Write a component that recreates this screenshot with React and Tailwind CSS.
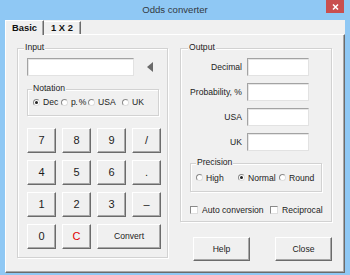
import React from "react";

function Radio({ checked, label, cls, tcls }) {
  return (
    <div className={"flex items-center gap-[3px] whitespace-nowrap shrink-0 " + cls}>
      <span className="w-[7px] h-[7px] rounded-full bg-white border border-t-[#8a8a8a] border-l-[#8a8a8a] border-r-[#dedede] border-b-[#dedede] flex items-center justify-center shrink-0">
        {checked && <span className="w-[3px] h-[3px] rounded-full bg-[#222]" />}
      </span>
      <span className={tcls}>{label}</span>
    </div>
  );
}

function Check({ label, cls }) {
  return (
    <div className={"flex items-center gap-[4px] whitespace-nowrap shrink-0 " + cls}>
      <span className="w-[8px] h-[8px] bg-white border border-t-[#8a8a8a] border-l-[#8a8a8a] border-r-[#dedede] border-b-[#dedede] shrink-0" />
      <span>{label}</span>
    </div>
  );
}

function Legend({ children, cls }) {
  return (
    <span className={"absolute -top-[7px] px-[1px] bg-[#f0f0f0] leading-[11px] text-[8.6px] " + cls}>
      {children}
    </span>
  );
}

const btn =
  "flex items-center justify-center bg-[#f0f0f0] border border-t-white border-l-white border-r-[#6b6b6b] border-b-[#6b6b6b] shadow-[inset_-1px_-1px_0_#a8a8a8]";

const box =
  "bg-white border border-t-[#a3a3a3] border-l-[#a3a3a3] border-r-[#e2e2e2] border-b-[#e2e2e2] shadow-[inset_1px_1px_0_#e6e6e6]";

const group =
  "relative border border-[#d2d2d2] shadow-[inset_1px_1px_0_#ffffff,1px_1px_0_#ffffff]";

function Key({ children, cls }) {
  return <div className={btn + " h-[25px] text-[11px] " + cls}>{children}</div>;
}

export default function App() {
  return (
    <div className="w-[350px] h-[275px] bg-[#8fc8f4] flex flex-col font-['Liberation_Sans',Arial,sans-serif] text-[#1c1c1c]">
      <div className="h-[20px] grid grid-cols-[1fr_auto_1fr] items-start">
        <div />
        <div className="text-[9.6px] leading-[20px] text-[#333a42]">Odds converter</div>
        <div className="flex justify-end pr-[6px]">
          <div className="w-[18px] h-[13px] bg-[#c94f4f] flex items-center justify-center">
            <svg width="7" height="6" viewBox="0 0 7 6">
              <path d="M1 0.5 L6 5.5 M6 0.5 L1 5.5" stroke="#fff" strokeWidth="1.5" />
            </svg>
          </div>
        </div>
      </div>
      <div className="flex-1 mx-[5px] mb-[2px] bg-[#f0f0f0] flex flex-col">
        <div className="h-[14px] flex items-start relative z-10">
          <div className="w-[39px] h-[15px] bg-[#f0f0f0] border-t border-l border-t-white border-l-white border-r border-r-[#6b6b6b] shadow-[inset_-1px_0_0_#a8a8a8] flex items-center justify-center font-bold text-[9.4px] text-[#111]">
            Basic
          </div>
          <div className="w-[37px] h-[13px] mt-[1px] bg-[#f0f0f0] border-t border-t-white border-r border-r-[#6b6b6b] shadow-[inset_-1px_0_0_#a8a8a8] flex items-center justify-center font-bold text-[9.4px] text-[#111]">
            1 X 2
          </div>
        </div>
        <div className="flex-1 border border-t-white border-l-white border-r-[#6b6b6b] border-b-[#6b6b6b] shadow-[inset_-1px_-1px_0_#a8a8a8] flex gap-[12px] pl-[11px] pt-[13px] text-[8.6px]">
          {/* Input group */}
          <div className={group + " w-[151px] h-[210px] pl-[9px] pt-[9px]"}>
            <Legend cls="left-[6px]">Input</Legend>
            <div className="flex items-center">
              <div className={box + " w-[107px] h-[18px]"} />
              <svg className="ml-[13px]" width="6" height="10" viewBox="0 0 6 10">
                <path d="M6 0 L0 5 L6 10 Z" fill="#6a6a6a" />
              </svg>
            </div>
            <div className={group + " mt-[13px] w-[132px] h-[27px] flex items-center pl-[5px]"}>
              <Legend cls="left-[4px]">Notation</Legend>
              <Radio checked label="Dec" cls="w-[28px]" />
              <Radio label="p. %" cls="w-[27px]" tcls="tracking-[-0.6px]" />
              <Radio label="USA" cls="w-[34px]" />
              <Radio label="UK" cls="" />
            </div>
            <div className="mt-[12px] grid grid-cols-[29px_29px_29px_29px] gap-x-[6px] gap-y-[7px]">
              <Key>7</Key>
              <Key>8</Key>
              <Key>9</Key>
              <Key>/</Key>
              <Key>4</Key>
              <Key>5</Key>
              <Key>6</Key>
              <Key>.</Key>
              <Key>1</Key>
              <Key>2</Key>
              <Key>3</Key>
              <Key>–</Key>
              <Key>0</Key>
              <Key cls="text-[#e00000]">C</Key>
              <div className={btn + " h-[25px] col-span-2 text-[8.6px]"}>Convert</div>
            </div>
          </div>
          {/* Right column */}
          <div className="w-[152px] flex flex-col">
            <div className={group + " h-[174px] pt-[9px]"}>
              <Legend cls="left-[7px]">Output</Legend>
              <div className="flex flex-col gap-[7px] pr-[22px]">
                {["Decimal", "Probability, %", "USA", "UK"].map((l) => (
                  <div key={l} className="flex items-center justify-end gap-[5px]">
                    <span>{l}</span>
                    <div className={box + " w-[62px] h-[18px]"} />
                  </div>
                ))}
              </div>
              <div className={group + " mt-[12px] ml-[9px] w-[132px] h-[29px] flex items-center pl-[5px] pt-[1px]"}>
                <Legend cls="left-[5px]">Precision</Legend>
                <Radio label="High" cls="w-[42px]" />
                <Radio checked label="Normal" cls="w-[41px]" />
                <Radio label="Round" cls="" />
              </div>
              <div className="mt-[12px] pl-[9px] flex items-center">
                <Check label="Auto conversion" cls="w-[80px]" />
                <Check label="Reciprocal" cls="" />
              </div>
            </div>
            <div className="mt-[15px] flex pl-[13px]">
              <div className={btn + " w-[57px] h-[24px]"}>Help</div>
              <div className={btn + " w-[57px] h-[24px] ml-auto"}>Close</div>
            </div>
          </div>
        </div>
      </div>
    </div>
  );
}
